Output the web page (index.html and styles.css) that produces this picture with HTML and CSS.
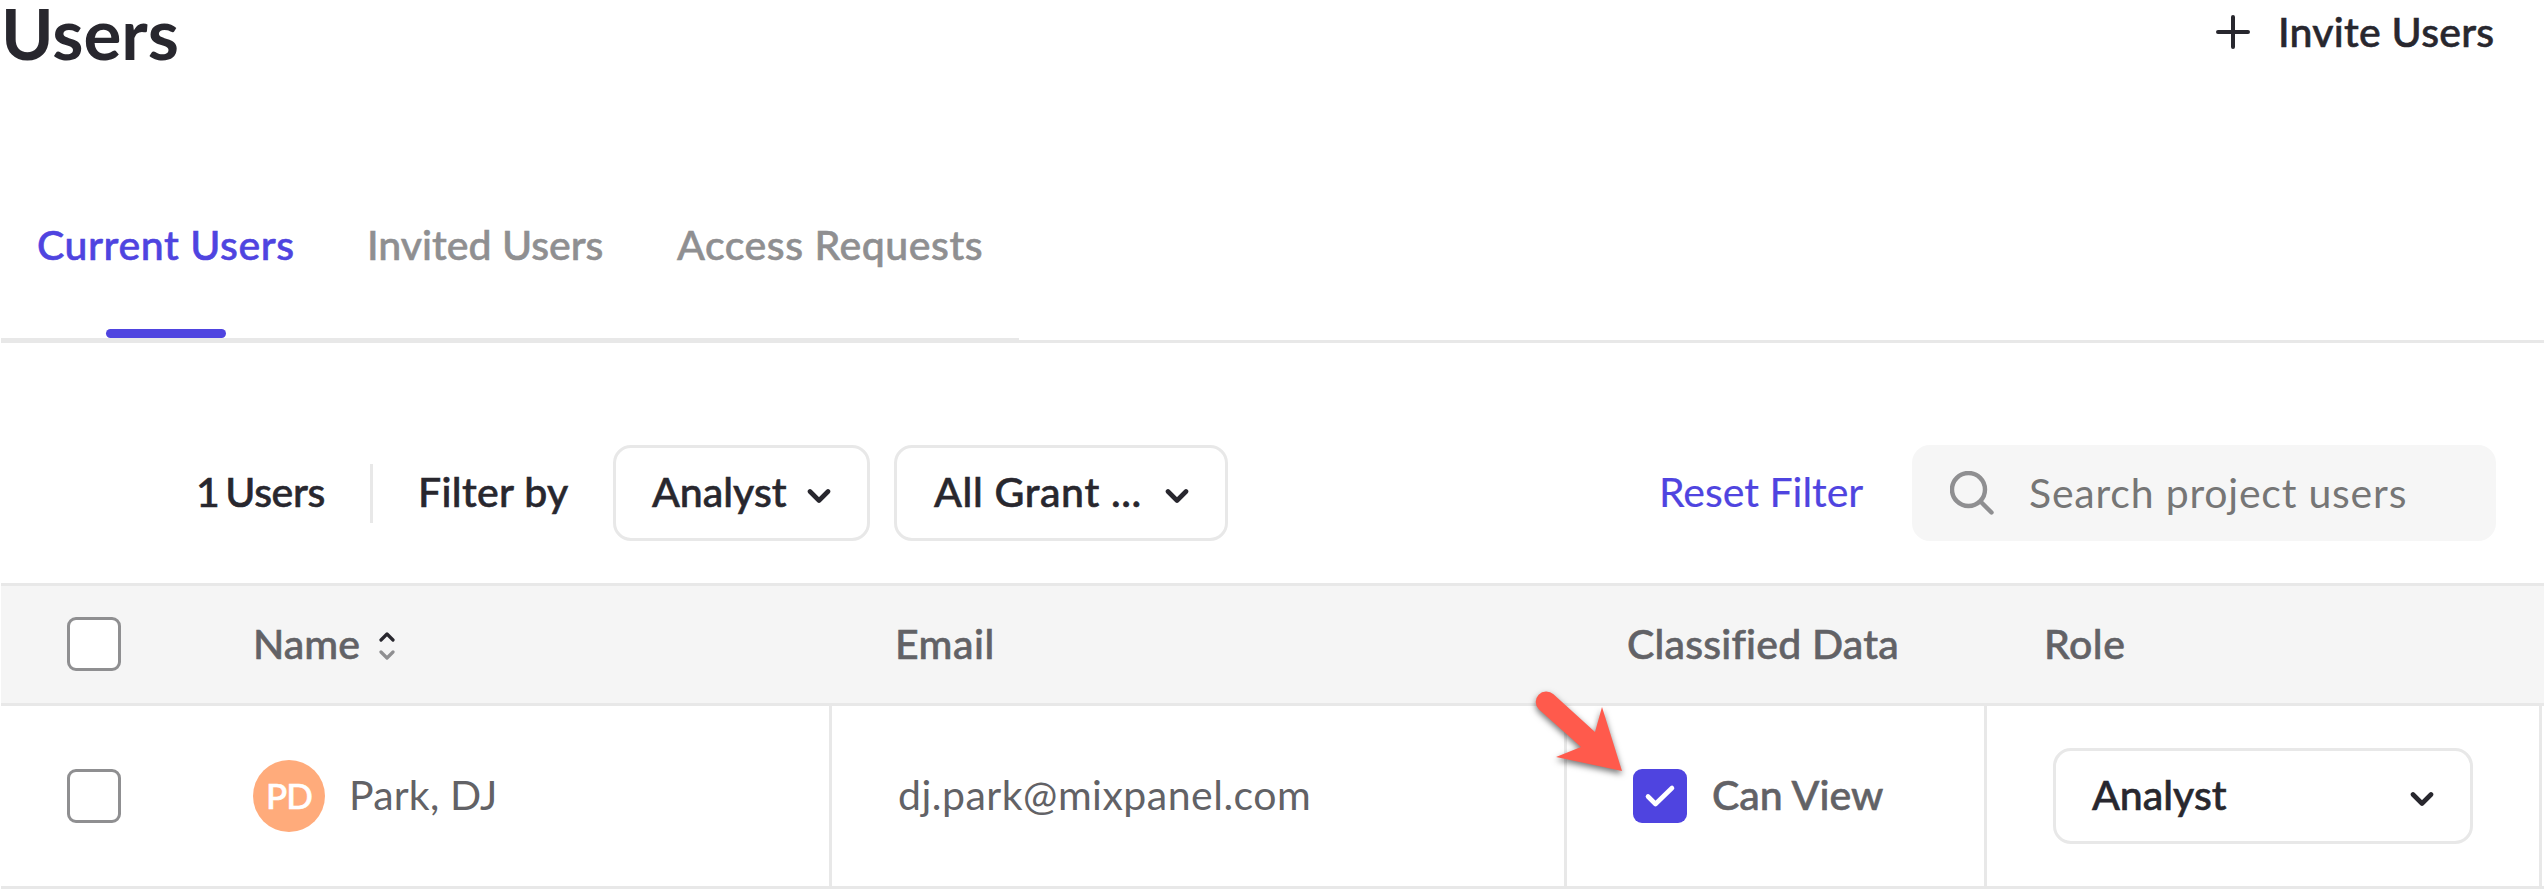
FILE: index.html
```html
<!DOCTYPE html>
<html lang="en">
<head>
<meta charset="utf-8">
<title>Users</title>
<link rel="stylesheet" href="styles.css">
</head>
<body>
<svg width="0" height="0" class="defs" aria-hidden="true">
  <symbol id="chevron" viewBox="0 0 24 16"><path d="M3 3.5 12 12.5 21 3.5" fill="none" stroke="currentColor" stroke-width="4.6" stroke-linecap="round" stroke-linejoin="round"/></symbol>
</svg>
<main class="page">
  <header class="header">
    <h1 class="title">Users</h1>
    <button class="invite"><svg class="plus" viewBox="0 0 36 36"><path d="M18 3v30M3 18h30" fill="none" stroke="currentColor" stroke-width="4" stroke-linecap="round"/></svg><span class="invite-label">Invite Users</span></button>
  </header>
  <nav class="tabs">
    <div class="tab-list">
      <a class="tab tab-active">Current Users</a>
      <a class="tab tab-invited">Invited Users</a>
      <a class="tab tab-access">Access Requests</a>
    </div>
    <div class="tab-rest"></div>
  </nav>
  <section class="toolbar">
    <span class="count">1 Users</span>
    <span class="divider"></span>
    <span class="filter-label">Filter by</span>
    <button class="select select-role"><span class="t-analyst">Analyst</span><svg class="chevron"><use href="#chevron"/></svg></button>
    <button class="select select-grant"><span class="t-grant">All Grant ...</span><svg class="chevron"><use href="#chevron"/></svg></button>
    <a class="reset">Reset Filter</a>
    <div class="search">
      <svg class="search-icon" viewBox="0 0 44 44"><circle cx="18.5" cy="18.5" r="16.5"/><path d="M30.5 30.5 41.5 41.5"/></svg>
      <span class="placeholder">Search project users</span>
    </div>
  </section>
  <section class="table">
    <div class="row head">
      <div class="cell c-check"><span class="checkbox"></span></div>
      <div class="cell c-name"><span class="t-name">Name</span><svg class="sort" viewBox="0 0 16 30"><path d="M2 9 8 3l6 6" stroke="#28272e"/><path d="M2 21l6 6 6-6" stroke="#8f8f91"/></svg></div>
      <div class="cell c-email"><span class="t-email">Email</span></div>
      <div class="cell c-data"><span class="t-data">Classified Data</span></div>
      <div class="cell c-role"><span class="t-role">Role</span></div>
    </div>
    <div class="row body">
      <div class="cell c-check"><span class="checkbox"></span></div>
      <div class="cell c-name"><span class="avatar">PD</span><span class="t-park">Park, DJ</span></div>
      <div class="cell c-email"><span class="t-address">dj.park@mixpanel.com</span></div>
      <div class="cell c-data"><span class="checkbox checked"><svg viewBox="0 0 54 54"><path d="M15 27.500 22.500 35 39 19" fill="none" stroke="#fff" stroke-width="4.600" stroke-linecap="round" stroke-linejoin="round"/></svg></span><span class="t-view">Can View</span>
        <svg class="arrow" viewBox="0 0 100 100"><path d="M18.500 6.300 60 44 67 19 87 83 21 69 46 59 4 21.500A10.500 10.500 0 0 1 18.500 6.300Z" fill="#ff5a4c"/></svg>
      </div>
      <div class="cell c-role"><button class="select select-wide"><span class="t-analyst">Analyst</span><svg class="chevron"><use href="#chevron"/></svg></button></div>
    </div>
  </section>
</main>
</body>
</html>
```
FILE: styles.css
```css
* { box-sizing: border-box; }
body { margin: 0; background: #fff; color: #28272e; font: 500 41px/50px Lato, "Open Sans", sans-serif; -webkit-text-stroke: .6px currentColor; overflow: hidden; }
button { margin: 0; padding: 0; border: 0; background: none; color: inherit; font: inherit; text-align: left; }
svg { display: block; flex: none; }
.defs { position: absolute; }
span, a { white-space: nowrap; }
[class^="t-"], .count, .filter-label, .reset { padding-bottom: 2px; }
.page { width: 2544px; height: 890px; padding-left: 1px; }

.header { height: 100px; display: flex; justify-content: space-between; align-items: flex-start; padding: 0 48px 0 0; }
.title { margin: 0; font-size: 71px; line-height: 66px; font-weight: 700; -webkit-text-stroke: 0; }
.invite { display: flex; align-items: center; height: 50px; margin-top: 7px; width: 281px; letter-spacing: .25px; }
.plus { width: 36px; height: 36px; margin: 0 27px 0 0; }

.tabs { height: 243px; display: flex; align-items: flex-end; }
.tab-list { width: 1018px; height: 243px; border-bottom: 5px solid #e8e8e8; display: flex; }
.tab-rest { flex: 1; border-bottom: 3px solid #e8e8e8; }
.tab { position: relative; color: #8f8f91; padding-top: 120px; }
.tab-active { color: #4f44e0; margin-left: 36px; width: 330px; letter-spacing: .56px; }
.tab-invited { width: 310px; }
.tab-access { letter-spacing: .55px; }
.tab-active::after { content: ""; position: absolute; left: 69px; bottom: 0; width: 120px; height: 9px; border-radius: 4.5px; background: #4f44e0; }

.toolbar { height: 240px; padding: 102px 48px 42px 195px; display: flex; align-items: center; }
.count { width: 174px; word-spacing: -4px; letter-spacing: -.4px; }
.divider { width: 3px; height: 59px; background: #e8e8e8; margin-right: 45px; }
.filter-label { width: 195px; letter-spacing: .35px; }
.select { display: flex; align-items: center; justify-content: space-between; height: 96px; border: 3px solid #e8e8e8; border-radius: 18px; background: #fff; padding: 0 36px 0 36px; }
.select-role { width: 257px; margin-right: 24px; }
.select-grant { width: 334px; padding-left: 37px; }
.select-wide { width: 420px; }
.t-grant { letter-spacing: .65px; }
.chevron { width: 24px; height: 16px; margin-top: 6px; }
.reset { color: #4f44e0; font-weight: 400; margin-left: auto; width: 253px; -webkit-text-stroke: .2px currentColor; }
.search { width: 584px; height: 96px; border-radius: 18px; background: #f6f6f6; display: flex; align-items: center; padding-left: 38px; }
.search-icon { width: 44px; height: 44px; margin-right: 35px; fill: none; stroke: #8f8f91; stroke-width: 4.4; stroke-linecap: round; }
.placeholder { color: #767676; font-weight: 400; letter-spacing: .78px; padding-bottom: 1px; -webkit-text-stroke: 0; }

.table { color: #626266; }
.row { display: grid; grid-template-columns: 252px 579px 735px 420px 555px; border-bottom: 3px solid #e8e8e8; }
.head { height: 123px; border-top: 3px solid #e8e8e8; background: #f5f5f5; }
.head .cell { padding-bottom: 1px; }
.head [class^="t-"] { padding-bottom: 0; }
.body { height: 183px; font-weight: 400; -webkit-text-stroke: 0; }
.cell { position: relative; display: flex; align-items: center; }
.body .cell + .cell:not(.c-check) { border-right: 3px solid #e8e8e8; }
.c-check { padding-left: 66px; }
.head .c-email { padding-left: 63px; }
.t-email, .t-role { letter-spacing: .5px; }
.t-address { letter-spacing: .5px; }
.t-data { letter-spacing: .2px; }
.t-park { letter-spacing: .2px; }
.body .c-email { padding-left: 66px; }
.head .c-data { padding-left: 60px; }
.body .c-data { padding-left: 66px; font-weight: 500; -webkit-text-stroke: .6px currentColor; }
.head .c-role { padding-left: 57px; }
.body .c-role { padding-left: 66px; font-weight: 500; color: #28272e; -webkit-text-stroke: .6px currentColor; }
.checkbox { width: 54px; height: 54px; border: 3px solid #8f8f91; border-radius: 9px; background: #fff; }
.checked { border: 0; background: #4f44e0; margin-right: 25px; }
.sort { width: 16px; height: 30px; margin-left: 19px; margin-top: 3px; fill: none; stroke-width: 3.2; stroke-linecap: round; stroke-linejoin: round; }
.avatar { width: 72px; height: 72px; border-radius: 50%; background: #ffab7b; color: #fff; font-size: 35px; font-weight: 500; letter-spacing: -1px; padding: 0 0 2px 0; -webkit-text-stroke: .6px currentColor; display: flex; align-items: center; justify-content: center; margin-right: 24px; }
.arrow { position: absolute; left: -32px; top: -18px; width: 100px; height: 100px; filter: drop-shadow(0 3px 3px rgba(0, 0, 0, .55)); }
```
